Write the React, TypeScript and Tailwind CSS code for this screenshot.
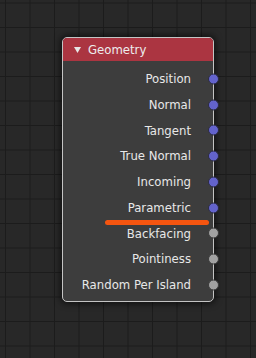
const OUTPUTS: { label: string; kind: "vector" | "float" }[] = [
  { label: "Position", kind: "vector" },
  { label: "Normal", kind: "vector" },
  { label: "Tangent", kind: "vector" },
  { label: "True Normal", kind: "vector" },
  { label: "Incoming", kind: "vector" },
  { label: "Parametric", kind: "vector" },
  { label: "Backfacing", kind: "float" },
  { label: "Pointiness", kind: "float" },
  { label: "Random Per Island", kind: "float" },
];

function Socket({ kind }: { kind: "vector" | "float" }) {
  return (
    <span
      className={
        kind === "vector"
          ? "absolute right-[-6px] top-1/2 -translate-y-1/2 w-[11px] h-[11px] rounded-full bg-[#6363cc] border border-[#2a2a40]"
          : "absolute right-[-6px] top-1/2 -translate-y-1/2 w-[11px] h-[11px] rounded-full bg-[#a1a1a1] border border-[#3a3a3a]"
      }
    />
  );
}

export default function App() {
  return (
    <div
      className="w-[256px] h-[358px] overflow-hidden bg-[#282828] bg-[linear-gradient(to_right,#1c1c1c_1px,transparent_1px),linear-gradient(to_bottom,#1c1c1c_1px,transparent_1px)] bg-[size:24.5px_24.5px] bg-[position:5px_2.5px] pl-[62px] pt-[37px]"
      style={{ fontFamily: '"DejaVu Sans Condensed", "DejaVu Sans", sans-serif' }}
    >
      <div className="w-[152px] h-[265px] rounded-[5px] border border-[#c4c4c4] bg-[#3d3d3d] shadow-[0_0_6px_2px_rgba(0,0,0,0.55)] flex flex-col">
        <div className="h-[23px] rounded-t-[4px] bg-[#ab3541] flex items-center pl-[11px] gap-[7px] text-[13px] text-[#ededed]">
          <svg width="7" height="6" viewBox="0 0 7 6">
            <polygon points="0,0 7,0 3.5,6" fill="#e6e6e6" />
          </svg>
          <span>Geometry</span>
        </div>
        <div className="flex flex-col pt-[5px]">
          {OUTPUTS.map((o) => (
            <div key={o.label} className="relative h-[25.75px] flex items-center justify-end pr-[22px] text-[13px] text-[#e8e8e8]">
              {o.label}
              <Socket kind={o.kind} />
              {o.label === "Parametric" && (
                <span className="absolute left-[42px] right-[4px] bottom-[-4px] h-[5px] rounded-full bg-[#f55510]" />
              )}
            </div>
          ))}
        </div>
      </div>
    </div>
  );
}
